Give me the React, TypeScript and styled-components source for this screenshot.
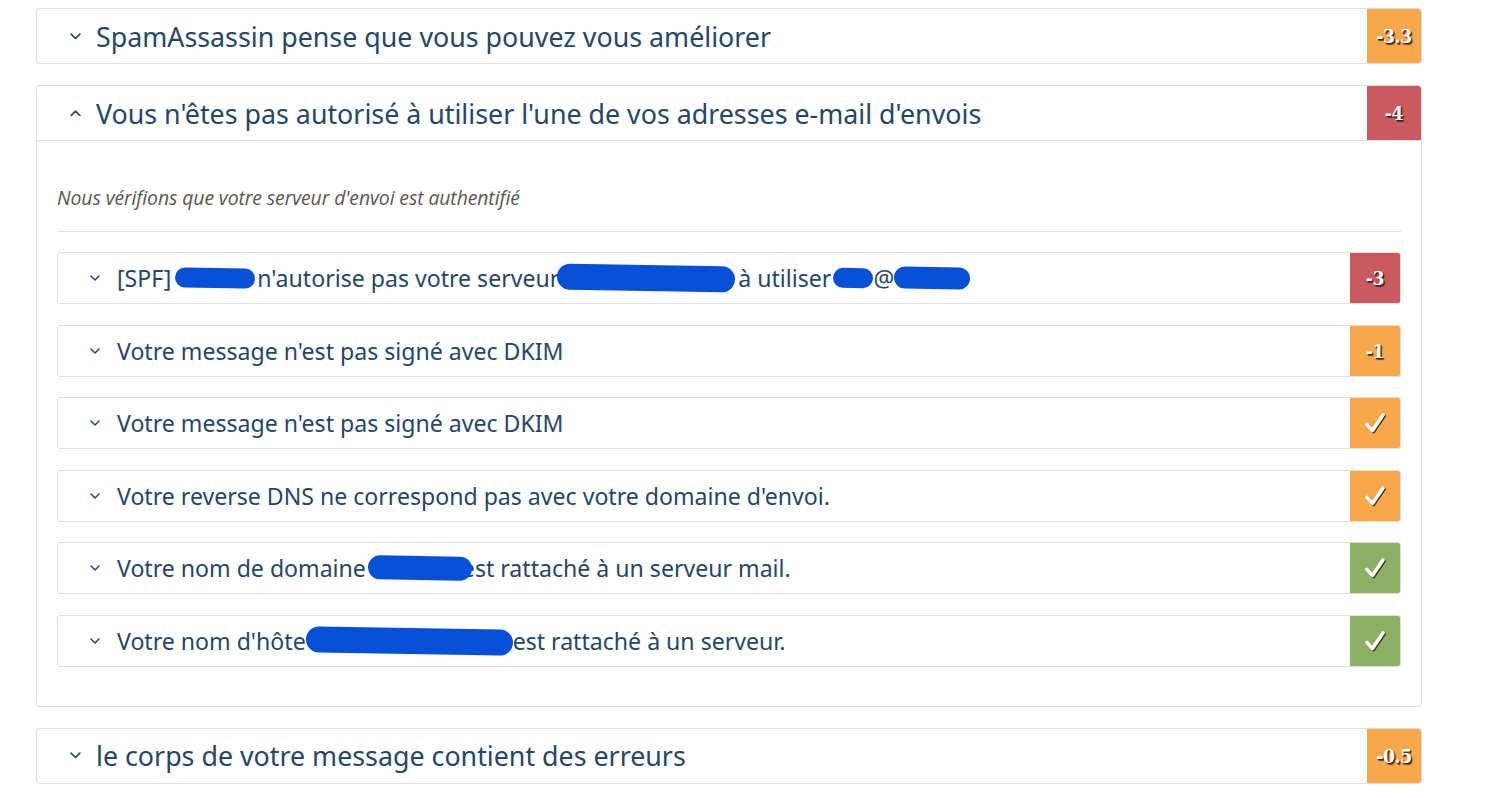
import React from "react";
import styled, { createGlobalStyle } from "styled-components";

const Global = createGlobalStyle`
  html, body { margin: 0; padding: 0; background: #fff; }
  body { font-family: "Noto Sans", sans-serif; }
  * { box-sizing: border-box; }
`;

const Page = styled.div`
  width: 1422px;
  padding: 8px 0 0 36px;
  display: flex;
  flex-direction: column;
  gap: 21px;
`;

const Card = styled.section`
  border: 1px solid #dedede;
  border-radius: 4px;
  background: #fff;
  overflow: hidden;
`;

const Header = styled.div<{ $open?: boolean }>`
  display: flex;
  align-items: stretch;
  height: ${(p) => (p.$open ? 55 : 54)}px;
  border-bottom: ${(p) => (p.$open ? "1px solid #dedede" : "none")};
`;

const HeaderTitle = styled.div`
  flex: 1;
  display: flex;
  align-items: center;
  padding-left: 33px;
  gap: 15px;
  color: #254766;
  font-size: 26.8px;
  white-space: nowrap;
`;

const Badge = styled.div<{ $color: string; $w: number }>`
  width: ${(p) => p.$w}px;
  flex: none;
  background: ${(p) => p.$color};
  display: flex;
  align-items: center;
  justify-content: center;
  color: #fff;
  font-family: "DejaVu Serif Condensed", "DejaVu Serif", serif;
  font-weight: bold;
  font-size: 19px;
  letter-spacing: -0.3px;
  text-shadow: 1px 1px 0 #3a2a14, 1.5px 1.5px 1px rgba(40, 25, 10, 0.7);
`;

const Body = styled.div`
  padding: 0 20px 39px;
`;

const Intro = styled.p`
  margin: 0;
  padding: 43px 0 20px;
  font-family: "Open Sans", sans-serif;
  font-style: italic;
  font-size: 19.4px;
  letter-spacing: -0.1px;
  color: #5b5650;
  border-bottom: 1px solid #e2e2e2;
`;

const List = styled.div`
  display: flex;
  flex-direction: column;
  gap: 20.5px;
  padding-top: 20px;
`;

const Item = styled.div`
  display: flex;
  height: 52px;
  border: 1px solid #dedede;
  border-radius: 3px;
  overflow: hidden;
`;

const ItemTitle = styled.div`
  flex: 1;
  display: flex;
  align-items: center;
  padding-left: 32px;
  gap: 17px;
  color: #254766;
  font-size: 23.1px;
  white-space: nowrap;
`;

const Blot = styled.span<{ $w: number; $ml?: number; $mr?: number; $h?: number }>`
  display: inline-block;
  width: ${(p) => p.$w}px;
  height: ${(p) => p.$h ?? 22}px;
  margin: 0 ${(p) => p.$mr ?? 0}px 0 ${(p) => p.$ml ?? 0}px;
  background: #0650d8;
  border-radius: 14px;
  transform: rotate(1deg);
`;

const Text = styled.span`
  display: inline-flex;
  align-items: center;
`;

const Chevron = ({ up, size = 11 }: { up?: boolean; size?: number }) => (
  <svg width={size} height={size * 0.6} viewBox="0 0 10 6" fill="none">
    <polyline
      points={up ? "1,5 5,1 9,5" : "1,1 5,5 9,1"}
      stroke="#254766"
      strokeWidth="1.5"
      strokeLinecap="round"
      strokeLinejoin="round"
    />
  </svg>
);

const Check = () => (
  <svg width="24" height="24" viewBox="0 0 24 24" style={{ filter: "drop-shadow(1.2px 1.2px 0.6px rgba(50,30,10,0.9))" }}>
    <path
      d="M4 13.5 L9.5 19.5 L20 4"
      stroke="#fff"
      strokeWidth="3.6"
      fill="none"
      strokeLinecap="round"
      strokeLinejoin="round"
    />
  </svg>
);

const ORANGE = "#f7a84c";
const RED = "#c95a62";
const GREEN = "#8bb063";

type Sub = { content: React.ReactNode; badge: React.ReactNode; color: string };

const subs: Sub[] = [
  {
    content: (
      <Text>
        [SPF]
        <Blot $w={80} $ml={4} $mr={2} $h={20} />
        n'autorise pas votre serveur
        <Blot $w={178} $ml={-2} $mr={3} $h={26} />
        à utiliser
        <Blot $w={40} $ml={2} $h={20} />@<Blot $w={76} $h={22} />
      </Text>
    ),
    badge: "-3",
    color: RED,
  },
  { content: "Votre message n'est pas signé avec DKIM", badge: "-1", color: ORANGE },
  { content: "Votre message n'est pas signé avec DKIM", badge: <Check />, color: ORANGE },
  { content: "Votre reverse DNS ne correspond pas avec votre domaine d'envoi.", badge: <Check />, color: ORANGE },
  {
    content: (
      <Text>
        Votre nom de domaine
        <Blot $w={104} $ml={2} $mr={-10} $h={24} />
        est rattaché à un serveur mail.
      </Text>
    ),
    badge: <Check />,
    color: GREEN,
  },
  {
    content: (
      <Text>
        Votre nom d'hôte
        <Blot $w={207} $ml={0} $mr={0} $h={26} />
        est rattaché à un serveur.
      </Text>
    ),
    badge: <Check />,
    color: GREEN,
  },
];

export default function App() {
  return (
    <>
      <Global />
      <Page>
        <Card>
          <Header>
            <HeaderTitle>
              <Chevron />
              SpamAssassin pense que vous pouvez vous améliorer
            </HeaderTitle>
            <Badge $color={ORANGE} $w={54}>-3.3</Badge>
          </Header>
        </Card>
        <Card>
          <Header $open>
            <HeaderTitle>
              <Chevron up />
              Vous n'êtes pas autorisé à utiliser l'une de vos adresses e-mail d'envois
            </HeaderTitle>
            <Badge $color={RED} $w={54}>-4</Badge>
          </Header>
          <Body>
            <Intro>Nous vérifions que votre serveur d'envoi est authentifié</Intro>
            <List>
              {subs.map((s, i) => (
                <Item key={i}>
                  <ItemTitle>
                    <Chevron size={10} />
                    {s.content}
                  </ItemTitle>
                  <Badge $color={s.color} $w={50}>{s.badge}</Badge>
                </Item>
              ))}
            </List>
          </Body>
        </Card>
        <Card>
          <Header>
            <HeaderTitle>
              <Chevron />
              le corps de votre message contient des erreurs
            </HeaderTitle>
            <Badge $color={ORANGE} $w={54}>-0.5</Badge>
          </Header>
        </Card>
      </Page>
    </>
  );
}
